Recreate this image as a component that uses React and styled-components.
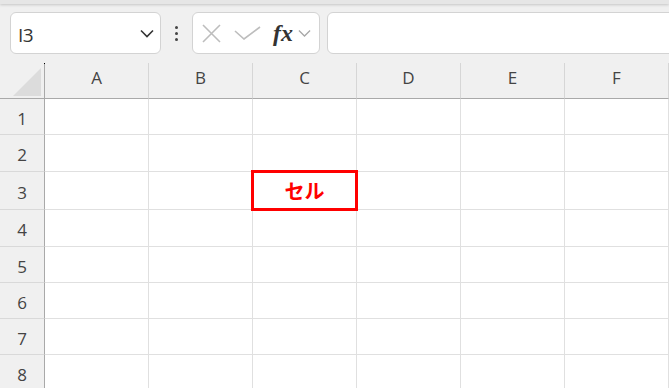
import React from 'react';
import styled, { createGlobalStyle } from 'styled-components';

const GlobalStyle = createGlobalStyle`
  html, body {
    margin: 0;
    padding: 0;
    background: #f0f0f0;
    overflow: hidden;
    font-family: "Open Sans", "Noto Sans", sans-serif;
  }
`;

const Page = styled.div`
  width: 669px;
  height: 388px;
  overflow: hidden;
  background: #f0f0f0;
`;

const RibbonEdge = styled.div`
  height: 4px;
  background: #e6e6e6;
  box-shadow: 0 1px 3px rgba(0, 0, 0, 0.18);
`;

const Toolbar = styled.div`
  display: flex;
  align-items: center;
  height: 42px;
  margin-top: 8px;
  padding-left: 10px;
`;

const Box = styled.div`
  height: 42px;
  box-sizing: border-box;
  background: #fff;
  border: 1px solid #d3d3d3;
  border-radius: 6px;
  display: flex;
  align-items: center;
`;

const NameBox = styled(Box)`
  width: 151px;
  padding: 0 6px 0 7px;
  justify-content: space-between;
`;

const NameText = styled.span`
  font-size: 19px;
  color: #333;
  letter-spacing: -0.5px;
  padding-top: 3px;
`;

const Grip = styled.div`
  width: 31px;
  display: flex;
  flex-direction: column;
  align-items: center;
  gap: 3px;
  span {
    width: 3px;
    height: 3px;
    border-radius: 50%;
    background: #444;
  }
`;

const FormulaButtons = styled(Box)`
  width: 128px;
  padding-left: 9px;
`;

const FxLabel = styled.span`
  font-family: "Liberation Serif", serif;
  font-style: italic;
  font-weight: bold;
  font-size: 24px;
  color: #333;
  margin-left: 12px;
  line-height: 1;
`;

const FormulaInput = styled(Box)`
  flex: 1;
  margin-left: 7px;
  margin-right: -20px;
`;

const Sheet = styled.div`
  margin-top: 9px;
  display: grid;
  grid-template-columns: 45px repeat(6, 104px);
`;

const Corner = styled.div`
  height: 36px;
  box-sizing: border-box;
  border-right: 1px solid #a9a9a9;
  border-bottom: 1px solid #a9a9a9;
  position: relative;
  display: flex;
  align-items: flex-end;
  justify-content: flex-end;
  padding: 0 3px 2px 0;
`;

const CornerDot = styled.i`
  position: absolute;
  right: -1px;
  top: 0;
  width: 1px;
  height: 1px;
  background: #000;
`;

const Triangle = styled.div`
  width: 0;
  height: 0;
  border-left: 28px solid transparent;
  border-bottom: 28px solid #dcdcdc;
`;

const ColHead = styled.div`
  height: 36px;
  box-sizing: border-box;
  border-bottom: 1px solid #a9a9a9;
  border-right: 1px solid #d6d6d6;
  display: flex;
  align-items: center;
  justify-content: center;
  font-size: 17px;
  color: #444;
  padding-bottom: 7px;
`;

const RowHead = styled.div`
  height: ${(p) => p.$h}px;
  box-sizing: border-box;
  border-right: 1px solid #a9a9a9;
  border-bottom: 1px solid #d9d9d9;
  display: flex;
  align-items: center;
  justify-content: center;
  font-size: 17px;
  color: #444;
  padding-top: 3px;
`;

const Cell = styled.div`
  height: ${(p) => p.$h}px;
  box-sizing: border-box;
  background: #fff;
  border-right: 1px solid #e0e0e0;
  border-bottom: 1px solid #e0e0e0;
  position: relative;
  display: flex;
  align-items: center;
  justify-content: center;
`;

const Marked = styled.div`
  position: absolute;
  inset: -2px;
  border: 3px solid #ff0000;
  z-index: 2;
  display: flex;
  align-items: center;
  justify-content: center;
  font-family: "Noto Sans CJK JP", sans-serif;
  font-weight: bold;
  font-size: 20px;
  color: #ff0000;
`;

const columns = ['A', 'B', 'C', 'D', 'E', 'F'];
const rowHeights = [36, 37, 38, 37, 36, 36, 36, 36];

const Chevron = ({ size = 14, color = '#333', width = 1.6 }) => (
  <svg width={size} height={size / 2 + 2} viewBox="0 0 14 9">
    <path d="M1 1.5 L7 7.5 L13 1.5" fill="none" stroke={color} strokeWidth={width} />
  </svg>
);

export default function App() {
  return (
    <Page>
      <GlobalStyle />
      <RibbonEdge />
      <Toolbar>
        <NameBox>
          <NameText>I3</NameText>
          <Chevron />
        </NameBox>
        <Grip>
          <span />
          <span />
          <span />
        </Grip>
        <FormulaButtons>
          <svg width="19" height="19" viewBox="0 0 19 19">
            <path d="M1 1 L18 18 M18 1 L1 18" stroke="#bdbdbd" strokeWidth="1.6" fill="none" />
          </svg>
          <svg width="27" height="14" viewBox="0 0 27 14" style={{ marginLeft: 13 }}>
            <path d="M1 5 L10 13 L26 1" stroke="#bdbdbd" strokeWidth="1.6" fill="none" />
          </svg>
          <FxLabel>fx</FxLabel>
          <span style={{ marginLeft: 5, display: 'flex' }}>
            <Chevron size={13} color="#a8a8a8" width={1.4} />
          </span>
        </FormulaButtons>
        <FormulaInput />
      </Toolbar>
      <Sheet>
        <Corner>
          <CornerDot />
          <Triangle />
        </Corner>
        {columns.map((c) => (
          <ColHead key={c}>{c}</ColHead>
        ))}
        {rowHeights.map((h, r) => (
          <React.Fragment key={r}>
            <RowHead $h={h}>{r + 1}</RowHead>
            {columns.map((c) => (
              <Cell key={c} $h={h}>
                {r === 2 && c === 'C' && <Marked>セル</Marked>}
              </Cell>
            ))}
          </React.Fragment>
        ))}
      </Sheet>
    </Page>
  );
}
